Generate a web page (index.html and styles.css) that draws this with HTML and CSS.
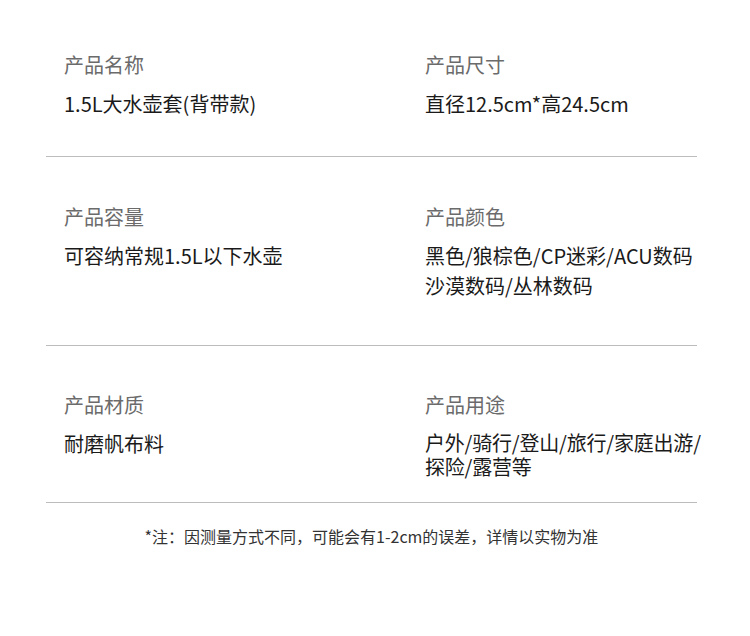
FILE: index.html
```html
<!DOCTYPE html>
<html lang="zh-CN">
<head>
<meta charset="utf-8">
<link rel="stylesheet" href="styles.css">
</head>
<body>
<div class="sheet">
  <div class="row row-a">
    <div class="cell">
      <div class="label">产品名称</div>
      <div class="value">1.5L大水壶套(背带款)</div>
    </div>
    <div class="cell">
      <div class="label">产品尺寸</div>
      <div class="value">直径12.5cm*高24.5cm</div>
    </div>
  </div>
  <div class="row row-b">
    <div class="cell">
      <div class="label">产品容量</div>
      <div class="value">可容纳常规1.5L以下水壶</div>
    </div>
    <div class="cell">
      <div class="label">产品颜色</div>
      <div class="value">黑色/狼棕色/CP迷彩/ACU数码<br>沙漠数码/丛林数码</div>
    </div>
  </div>
  <div class="row row-c">
    <div class="cell">
      <div class="label">产品材质</div>
      <div class="value">耐磨帆布料</div>
    </div>
    <div class="cell">
      <div class="label">产品用途</div>
      <div class="value tight">户外/骑行/登山/旅行/家庭出游/<br>探险/露营等</div>
    </div>
  </div>
  <p class="note">*注：因测量方式不同，可能会有1-2cm的误差，详情以实物为准</p>
</div>
</body>
</html>
```
FILE: styles.css
```css
html, body {
  margin: 0;
  padding: 0;
  background: #ffffff;
}
body {
  font-family: "Noto Sans CJK SC", "Noto Sans", sans-serif;
  width: 750px;
  height: 636px;
  overflow: hidden;
}
.sheet {
  padding: 0 53px 0 46px;
}
.row {
  display: grid;
  grid-template-columns: 361px 1fr;
  padding-left: 18px;
  border-bottom: 1px solid #bdbdbd;
}
.row-a {
  padding-top: 50px;
  padding-bottom: 37px;
}
.row-b {
  padding-top: 45px;
  padding-bottom: 44px;
}
.row-c {
  padding-top: 44px;
  padding-bottom: 23px;
}
.label {
  font-size: 20px;
  line-height: 30px;
  color: #6b6b6b;
}
.value {
  margin-top: 9px;
  font-size: 20px;
  line-height: 30px;
  color: #1a1a1a;
  white-space: nowrap;
}
.value.tight {
  line-height: 24px;
  margin-top: 11px;
  letter-spacing: -0.2px;
}
.note {
  margin: 21px 0 0;
  text-align: center;
  font-size: 16px;
  line-height: 24px;
  color: #333333;
}
```
